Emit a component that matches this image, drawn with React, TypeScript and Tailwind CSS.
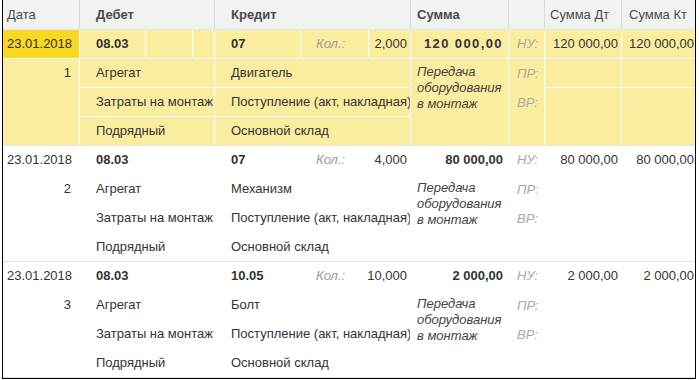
import React from 'react';

interface Entry {
  date: string;
  num: number;
  dt: string;
  dtSub: string[];
  kt: string;
  ktSub: string[];
  qty: string;
  sum: string;
  content: string;
  selected?: boolean;
}

const entries: Entry[] = [
  {
    date: '23.01.2018',
    num: 1,
    dt: '08.03',
    dtSub: ['Агрегат', 'Затраты на монтаж', 'Подрядный'],
    kt: '07',
    ktSub: ['Двигатель', 'Поступление (акт, накладная)', 'Основной склад'],
    qty: '2,000',
    sum: '120 000,00',
    content: 'Передача оборудования в монтаж',
    selected: true,
  },
  {
    date: '23.01.2018',
    num: 2,
    dt: '08.03',
    dtSub: ['Агрегат', 'Затраты на монтаж', 'Подрядный'],
    kt: '07',
    ktSub: ['Механизм', 'Поступление (акт, накладная)', 'Основной склад'],
    qty: '4,000',
    sum: '80 000,00',
    content: 'Передача оборудования в монтаж',
  },
  {
    date: '23.01.2018',
    num: 3,
    dt: '08.03',
    dtSub: ['Агрегат', 'Затраты на монтаж', 'Подрядный'],
    kt: '10.05',
    ktSub: ['Болт', 'Поступление (акт, накладная)', 'Основной склад'],
    qty: '10,000',
    sum: '2 000,00',
    content: 'Передача оборудования в монтаж',
  },
];

const cols = 'grid grid-cols-[76px_65px_46px_21px_85px_67px_41px_97px_35px_76px_73px] gap-x-px';

const Row = ({ e }: { e: Entry }) => {
  const bg = e.selected ? 'bg-[#fbed9f]' : 'bg-white';
  const cell = `${bg} flex items-center whitespace-nowrap overflow-hidden`;
  return (
    <div className={`${cols} grid-rows-[28px_28px_28px_28px] gap-y-px bg-white border-b border-[#e2e2e2]`}>
      {/* date + number */}
      <div className={`col-start-1 row-start-1 flex items-center pl-[4px] ${e.selected ? 'bg-[#f9d823]' : 'bg-white'}`}>
        {e.date}
      </div>
      <div className={`col-start-1 row-start-2 row-span-3 ${bg} flex justify-end items-start pr-[8px] leading-[28px]`}>
        {e.num}
      </div>

      {/* debit */}
      <div className={`col-start-2 row-start-1 ${cell} pl-4 font-bold`}>{e.dt}</div>
      <div className={`col-start-3 row-start-1 ${bg}`} />
      <div className={`col-start-4 row-start-1 ${bg}`} />
      {e.dtSub.map((s, i) => (
        <div
          key={s}
          className={`col-start-2 col-span-3 ${i === 0 ? 'row-start-2' : i === 1 ? 'row-start-3' : 'row-start-4'} ${cell} pl-4`}
        >
          {s}
        </div>
      ))}

      {/* credit */}
      <div className={`col-start-5 row-start-1 ${cell} pl-4 font-bold`}>{e.kt}</div>
      <div className={`col-start-6 row-start-1 ${cell} pl-[15px] italic text-[#9a9a9a]`}>Кол.:</div>
      {/* quantity may spill left over the Кол. cell, as in the original */}
      <div className={`col-start-7 row-start-1 ${bg} flex items-center justify-end whitespace-nowrap pr-[3px]`}>
        <span>{e.qty}</span>
      </div>
      {e.ktSub.map((s, i) => (
        <div
          key={s}
          className={`col-start-5 col-span-3 ${i === 0 ? 'row-start-2' : i === 1 ? 'row-start-3' : 'row-start-4'} ${cell} pl-4`}
        >
          {s}
        </div>
      ))}

      {/* sum + content */}
      <div className={`col-start-8 row-start-1 ${cell} justify-end pr-[5px] font-bold ${e.selected ? 'tracking-[1.4px]' : ''}`}>
        {e.sum}
      </div>
      <div className={`col-start-8 row-start-2 row-span-3 ${bg} pl-[6px] pr-1 pt-[5px] italic leading-[16px] text-[#444]`}>
        {e.content}
      </div>

      {/* accounting kinds */}
      <div className={`col-start-9 row-start-1 ${cell} pl-2 italic text-[#a8a8a8]`}>НУ:</div>
      <div className={`col-start-9 row-start-2 row-span-3 ${bg} pl-2 italic text-[#a8a8a8] leading-[29px]`}>
        <div>ПР:</div>
        <div>ВР:</div>
      </div>

      {/* sums dt / kt */}
      <div className={`col-start-10 row-start-1 ${cell} justify-end pr-[3px]`}>{e.sum}</div>
      <div className={`col-start-10 row-start-2 ${bg}`} />
      <div className={`col-start-10 row-start-3 row-span-2 ${bg}`} />
      <div className={`col-start-11 row-start-1 ${cell} justify-end pr-px`}>{e.sum}</div>
      <div className={`col-start-11 row-start-2 ${bg}`} />
      <div className={`col-start-11 row-start-3 row-span-2 ${bg}`} />
    </div>
  );
};

export default function App() {
  return (
    <div className="w-[699px] h-[380px] bg-white overflow-hidden font-['Liberation_Sans',Arial,sans-serif] text-[13px] text-[#333]">
      <div className="ml-[2px] w-[694px] border-x border-b border-black">
        <div className={`${cols} bg-[#d9d9d9] border-b border-[#e6e6e6] text-[#4a4a4a]`}>
          <div className="col-span-1 h-[29px] bg-[#f2f2f2] flex items-center pl-[4px]">Дата</div>
          <div className="col-span-3 h-[29px] bg-[#f2f2f2] flex items-center pl-4 font-bold">Дебет</div>
          <div className="col-span-3 h-[29px] bg-[#f2f2f2] flex items-center pl-4 font-bold">Кредит</div>
          <div className="h-[29px] bg-[#f2f2f2] flex items-center pl-[6px] font-bold">Сумма</div>
          <div className="h-[29px] bg-[#f2f2f2]" />
          <div className="h-[29px] bg-[#f2f2f2] flex items-center pl-[5px]">Сумма Дт</div>
          <div className="h-[29px] bg-[#f2f2f2] flex items-center pl-[7px]">Сумма Кт</div>
        </div>
        {entries.map(e => (
          <Row key={e.num} e={e} />
        ))}
      </div>
    </div>
  );
}
